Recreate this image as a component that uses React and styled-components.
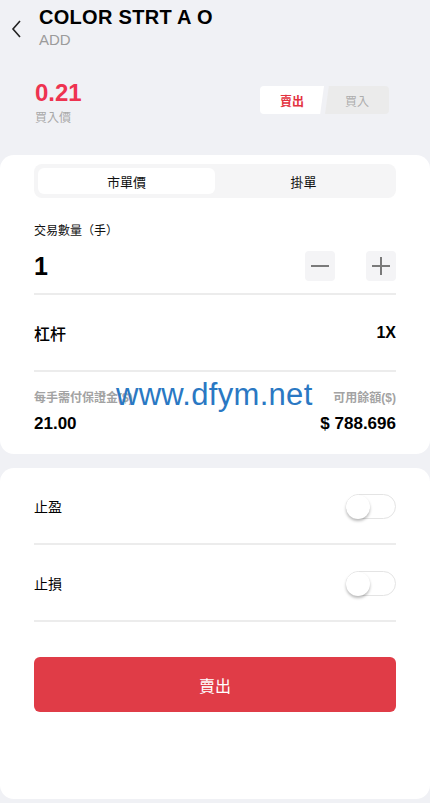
import React, { useState } from "react";
import styled, { createGlobalStyle } from "styled-components";

const GlobalStyle = createGlobalStyle`
  html, body {
    margin: 0;
    padding: 0;
    background: #f0f1f5;
  }
  body {
    font-family: "Liberation Sans", "Noto Sans CJK TC", Arial, sans-serif;
    -webkit-font-smoothing: antialiased;
  }
`;

const Page = styled.div`
  width: 430px;
  min-height: 803px;
  background: #f0f1f5;
  display: flex;
  flex-direction: column;
`;

const Header = styled.div`
  display: flex;
  align-items: flex-start;
  padding: 5px 0 0 10px;
  height: 55px;
  box-sizing: border-box;
`;

const BackButton = styled.button`
  border: 0;
  background: none;
  padding: 0;
  margin: 14px 15px 0 0;
  width: 14px;
  height: 20px;
  display: flex;
  cursor: pointer;
`;

const TitleBlock = styled.div`
  display: flex;
  flex-direction: column;
`;

const Title = styled.div`
  font-size: 20px;
  line-height: 24px;
  font-weight: 700;
  color: #000;
  letter-spacing: 0.3px;
`;

const Subtitle = styled.div`
  font-size: 15px;
  line-height: 18px;
  color: #9b9b9b;
  margin-top: 2px;
`;

const PriceRow = styled.div`
  display: flex;
  justify-content: space-between;
  align-items: flex-start;
  padding: 24px 41px 0 35px;
  height: 100px;
  box-sizing: border-box;
`;

const PriceBlock = styled.div`
  display: flex;
  flex-direction: column;
`;

const Price = styled.div`
  font-size: 24px;
  line-height: 28px;
  font-weight: 700;
  color: #ee3350;
`;

const PriceLabel = styled.div`
  font-family: "Noto Sans CJK TC", sans-serif;
  font-size: 12px;
  line-height: 16px;
  color: #a8a8a8;
  margin-top: 2px;
`;

const Segment = styled.div`
  display: flex;
  margin-top: 7px;
`;

const SegmentItem = styled.button`
  border: 0;
  width: 64px;
  height: 28px;
  font-family: "Noto Sans CJK TC", sans-serif;
  font-size: 12px;
  cursor: pointer;
  background: ${(p) => (p.$active ? "#ffffff" : "#ebebeb")};
  color: ${(p) => (p.$active ? "#e3323f" : "#adadad")};
  font-weight: ${(p) => (p.$active ? 700 : 400)};
  border-radius: ${(p) => (p.$first ? "4px 0 0 4px" : "0 4px 4px 0")};
  clip-path: ${(p) =>
    p.$first
      ? "polygon(0 0, 100% 0, 94% 100%, 0 100%)"
      : "polygon(6% 0, 100% 0, 100% 100%, 0 100%)"};
  margin-left: ${(p) => (p.$first ? "0" : "1px")};
`;

const Card = styled.div`
  background: #fff;
  border-radius: 14px;
  padding: ${(p) => p.$pad || "9px 34px 0"};
  height: ${(p) => p.$h};
  box-sizing: border-box;
  position: relative;
  margin-bottom: ${(p) => p.$mb || "0"};
`;

const Tabs = styled.div`
  display: flex;
  background: #f5f5f6;
  border-radius: 8px;
  padding: 4px;
  height: 34px;
  box-sizing: border-box;
`;

const Tab = styled.button`
  flex: 1;
  border: 0;
  border-radius: 6px;
  background: ${(p) => (p.$active ? "#fff" : "transparent")};
  font-family: "Noto Sans CJK TC", sans-serif;
  font-size: 13px;
  color: #111;
  cursor: pointer;
`;

const FieldLabel = styled.div`
  font-family: "Noto Sans CJK TC", sans-serif;
  font-size: 12px;
  line-height: 16px;
  color: #111;
  margin-top: 24px;
`;

const QtyRow = styled.div`
  display: flex;
  align-items: center;
  justify-content: space-between;
  height: 44px;
  margin-top: 6px;
  border-bottom: 2px solid #ececec;
  padding-bottom: 5px;
`;

const QtyValue = styled.div`
  font-size: 25px;
  font-weight: 700;
  color: #000;
`;

const Steppers = styled.div`
  display: flex;
  gap: 31px;
`;

const StepButton = styled.button`
  width: 30px;
  height: 30px;
  border: 0;
  border-radius: 4px;
  background: #f4f4f6;
  display: flex;
  align-items: center;
  justify-content: center;
  padding: 0;
  cursor: pointer;
`;

const LeverRow = styled.div`
  display: flex;
  align-items: center;
  justify-content: space-between;
  height: 75px;
  border-bottom: 2px solid #ececec;
`;

const LeverLabel = styled.div`
  font-family: "Noto Sans CJK TC", sans-serif;
  font-size: 16px;
  font-weight: 500;
  color: #000;
`;

const LeverValue = styled.div`
  font-size: 16px;
  font-weight: 700;
  color: #000;
`;

const InfoGrid = styled.div`
  display: grid;
  grid-template-columns: 1fr 1fr;
  row-gap: 8px;
  margin-top: 18px;
`;

const InfoLabel = styled.div`
  font-family: "Liberation Sans", "Noto Sans CJK TC", sans-serif;
  font-size: 12px;
  line-height: 16px;
  font-weight: 700;
  color: #a3a3a3;
  text-align: ${(p) => (p.$right ? "right" : "left")};
`;

const InfoValue = styled.div`
  font-size: 17px;
  line-height: 19px;
  font-weight: 700;
  color: #000;
  text-align: ${(p) => (p.$right ? "right" : "left")};
`;

const Watermark = styled.div`
  position: absolute;
  left: 116px;
  top: 222px;
  font-family: "Liberation Sans", Arial, sans-serif;
  font-size: 31px;
  color: #2a78c3;
  pointer-events: none;
  letter-spacing: 0.3px;
`;

const ToggleRow = styled.div`
  display: flex;
  align-items: center;
  justify-content: space-between;
  height: 77px;
  padding-top: 1px;
  border-bottom: 2px solid #ececec;
  box-sizing: border-box;
`;

const ToggleLabel = styled.div`
  font-family: "Noto Sans CJK TC", sans-serif;
  font-size: 14px;
  color: #000;
`;

const Switch = styled.button`
  width: 50px;
  height: 25px;
  border-radius: 13px;
  border: 1px solid #e4e4e4;
  background: ${(p) => (p.$on ? "#e03c47" : "#fff")};
  padding: 0;
  position: relative;
  cursor: pointer;
  box-sizing: border-box;
`;

const Knob = styled.span`
  position: absolute;
  top: 0;
  left: ${(p) => (p.$on ? "25px" : "-1px")};
  width: 24px;
  height: 24px;
  border-radius: 50%;
  background: #fff;
  box-shadow: 0 2px 3px rgba(0, 0, 0, 0.28);
`;

const SubmitButton = styled.button`
  width: 100%;
  height: 55px;
  border: 0;
  border-radius: 6px;
  background: #e03c47;
  color: #fff;
  font-family: "Noto Sans CJK TC", sans-serif;
  font-size: 16px;
  margin-top: 35px;
  cursor: pointer;
`;

const Toggle = ({ label }) => {
  const [on, setOn] = useState(false);
  return (
    <ToggleRow>
      <ToggleLabel>{label}</ToggleLabel>
      <Switch $on={on} onClick={() => setOn(!on)}>
        <Knob $on={on} />
      </Switch>
    </ToggleRow>
  );
};

const App = () => {
  const [side, setSide] = useState("sell");
  const [tab, setTab] = useState("market");
  const [qty, setQty] = useState(1);

  return (
    <Page>
      <GlobalStyle />
      <Header>
        <BackButton>
          <svg width="14" height="20" viewBox="0 0 14 20">
            <path d="M10 2 L3 10 L10 18" fill="none" stroke="#222" strokeWidth="1.6" />
          </svg>
        </BackButton>
        <TitleBlock>
          <Title>COLOR STRT A O</Title>
          <Subtitle>ADD</Subtitle>
        </TitleBlock>
      </Header>

      <PriceRow>
        <PriceBlock>
          <Price>0.21</Price>
          <PriceLabel>買入價</PriceLabel>
        </PriceBlock>
        <Segment>
          <SegmentItem $first $active={side === "sell"} onClick={() => setSide("sell")}>
            賣出
          </SegmentItem>
          <SegmentItem $active={side === "buy"} onClick={() => setSide("buy")}>
            買入
          </SegmentItem>
        </Segment>
      </PriceRow>

      <Card $h="299px" $mb="14px">
        <Tabs>
          <Tab $active={tab === "market"} onClick={() => setTab("market")}>市單價</Tab>
          <Tab $active={tab === "limit"} onClick={() => setTab("limit")}>掛單</Tab>
        </Tabs>
        <FieldLabel>交易數量（手）</FieldLabel>
        <QtyRow>
          <QtyValue>{qty}</QtyValue>
          <Steppers>
            <StepButton onClick={() => setQty(Math.max(1, qty - 1))}>
              <svg width="20" height="20" viewBox="0 0 20 20">
                <path d="M1 10 H19" stroke="#7a7a7a" strokeWidth="2" />
              </svg>
            </StepButton>
            <StepButton onClick={() => setQty(qty + 1)}>
              <svg width="20" height="20" viewBox="0 0 20 20">
                <path d="M1 10 H19 M10 1 V19" stroke="#7a7a7a" strokeWidth="2" />
              </svg>
            </StepButton>
          </Steppers>
        </QtyRow>
        <LeverRow>
          <LeverLabel>杠杆</LeverLabel>
          <LeverValue>1X</LeverValue>
        </LeverRow>
        <InfoGrid>
          <InfoLabel>每手需付保證金($)</InfoLabel>
          <InfoLabel $right>可用餘額($)</InfoLabel>
          <InfoValue>21.00</InfoValue>
          <InfoValue $right>$ 788.696</InfoValue>
        </InfoGrid>
        <Watermark>www.dfym.net</Watermark>
      </Card>

      <Card $h="331px" $pad="0 34px">
        <Toggle label="止盈" />
        <Toggle label="止損" />
        <SubmitButton>賣出</SubmitButton>
      </Card>
    </Page>
  );
};

export default App;
